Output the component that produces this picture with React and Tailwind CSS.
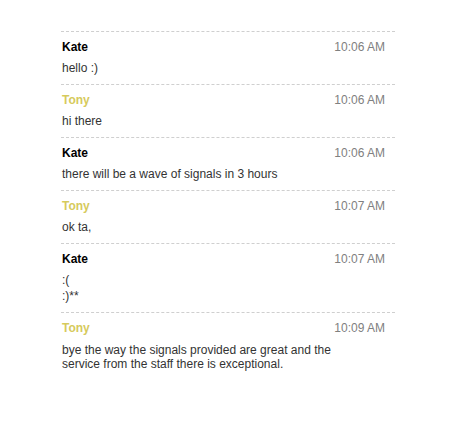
const messages = [
  { name: "Kate", time: "10:06 AM", lines: ["hello :)"] },
  { name: "Tony", time: "10:06 AM", lines: ["hi there"] },
  { name: "Kate", time: "10:06 AM", lines: ["there will be a wave of signals in 3 hours"] },
  { name: "Tony", time: "10:07 AM", lines: ["ok ta,"] },
  { name: "Kate", time: "10:07 AM", lines: [":(", ":)**"] },
  {
    name: "Tony",
    time: "10:09 AM",
    lines: ["bye the way the signals provided are great and the service from the staff there is exceptional."],
    tight: true
  }
];

export default function App() {
  return (
    <div className="min-h-[429px] w-[458px] bg-white pt-[31px] font-['Liberation_Sans',Arial,sans-serif] text-[12px]">
      <div className="ml-[61px] w-[334px]">
        {messages.map((msg, i) => (
          <div key={i} className="border-t border-dashed border-[#cfcfcf] pt-[7px] pb-[8px]">
            <div className="flex h-4 items-center justify-between pl-px pr-[10px] leading-4">
              <span
                className={
                  msg.name === "Kate" ? "font-bold text-black" : "font-bold text-[#d6ca5c]"
                }
              >
                {msg.name}
              </span>
              <span className="text-[#808080]">{msg.time}</span>
            </div>
            <div className={msg.tight ? "mt-[7px] w-[290px] pl-px leading-[14px] text-[#333]" : "mt-[5px] pl-px leading-4 text-[#333]"}>
              {msg.lines.map((line, j) => (
                <div key={j}>{line}</div>
              ))}
            </div>
          </div>
        ))}
      </div>
    </div>
  );
}
